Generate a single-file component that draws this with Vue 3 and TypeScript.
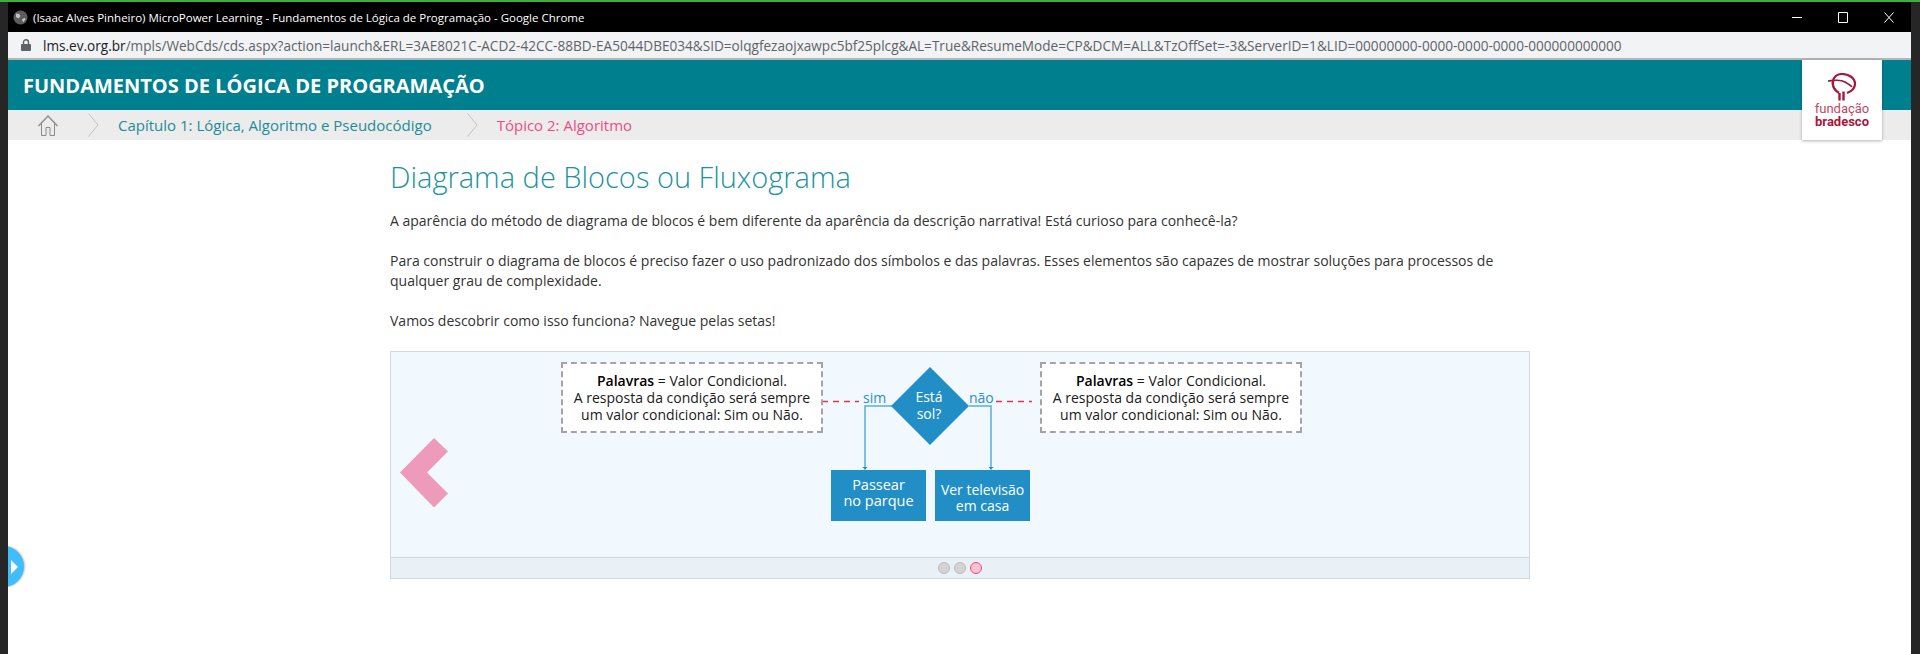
<script setup lang="ts">
interface Note {
  id: number
  lead: string
  rest: string
}

const notes: Note[] = [
  { id: 1, lead: 'Palavras', rest: ' = Valor Condicional.' },
  { id: 2, lead: 'Palavras', rest: ' = Valor Condicional.' },
]

const dots = [false, false, true]
</script>

<template>
  <div class="window">
    <div class="titlebar">
      <svg class="globe" width="15" height="15" viewBox="0 0 15 15">
        <circle cx="7.5" cy="7.5" r="7" fill="#5c5c5c" />
        <path d="M3 3.5l3 .5 1.500 2-2 2.500L3 7zM9 9l3-1 .5 1.500-2.500 3z" fill="#c4c4c4" />
      </svg>
      <span class="window-title">(Isaac Alves Pinheiro) MicroPower Learning - Fundamentos de Lógica de Programação - Google Chrome</span>
      <div class="controls">
        <svg width="10" height="10" viewBox="0 0 10 10"><path d="M0 5.500h10" stroke="#fff" /></svg>
        <svg width="10" height="11" viewBox="0 0 10 11"><path d="M.5.5h9v10h-9z" stroke="#fff" fill="none" /></svg>
        <svg width="10" height="11" viewBox="0 0 10 11"><path d="M.5.5l9 10M9.500.5l-9 10" stroke="#fff" fill="none" /></svg>
      </div>
    </div>

    <div class="urlbar">
      <svg width="10" height="12" viewBox="0 0 10 12">
        <path d="M2.500 5V3.200a2.500 2.500 0 0 1 5 0V5" stroke="#5f6368" stroke-width="1.400" fill="none" />
        <rect y="5" width="10" height="7" rx="1" fill="#5f6368" />
      </svg>
      <span class="url"><b>lms.ev.org.br</b>/mpls/WebCds/cds.aspx?action=launch&amp;ERL=3AE8021C-ACD2-42CC-88BD-EA5044DBE034&amp;SID=olqgfezaojxawpc5bf25plcg&amp;AL=True&amp;ResumeMode=CP&amp;DCM=ALL&amp;TzOffSet=-3&amp;ServerID=1&amp;LID=00000000-0000-0000-0000-000000000000</span>
    </div>

    <div class="page">
      <header class="course-bar">
        <h1>FUNDAMENTOS DE LÓGICA DE PROGRAMAÇÃO</h1>
      </header>

      <nav class="crumbs">
        <svg class="home" width="20" height="21" viewBox="0 0 20 21" fill="none" stroke="#8a8a8a">
          <path d="M.5 11L10 1l9.500 10" stroke-width="1.300" />
          <path d="M3.500 9v11.500h4.500v-8h4v8h4.500V9" />
        </svg>
        <svg class="sep" width="11" height="24" viewBox="0 0 11 24"><path d="M.5.5L10 12 .5 23.500" stroke="#c2c2c2" fill="none" /></svg>
        <span class="crumb-chapter">Capítulo 1: Lógica, Algoritmo e Pseudocódigo</span>
        <svg class="sep" width="11" height="24" viewBox="0 0 11 24"><path d="M.5.5L10 12 .5 23.500" stroke="#c2c2c2" fill="none" /></svg>
        <span class="crumb-topic">Tópico 2: Algoritmo</span>
      </nav>

      <div class="logo-card">
        <svg width="30" height="28" viewBox="0 0 30 28" fill="none" stroke="#a6163c">
          <path d="M6 7C8 2.500 12 1 15 1c7 0 13 4 13 10 0 4-3 7-8 9" stroke-width="2.200" />
          <path d="M1 8c6-.5 12-2 17 1 3 2 6 3 7 5" stroke-width="1.600" />
          <path d="M6 7c-1 5 1 10 6 13" stroke-width="2.400" />
          <path d="M12.500 20v7.500M16.500 18.500v9" stroke-width="2.400" />
        </svg>
        <span class="logo-top">fundação</span>
        <span class="logo-bottom">bradesco</span>
      </div>

      <main class="content">
        <h2>Diagrama de Blocos ou Fluxograma</h2>
        <p>A aparência do método de diagrama de blocos é bem diferente da aparência da descrição narrativa! Está curioso para conhecê-la?</p>
        <p>Para construir o diagrama de blocos é preciso fazer o uso padronizado dos símbolos e das palavras. Esses elementos são capazes de mostrar soluções para processos de qualquer grau de complexidade.</p>
        <p>Vamos descobrir como isso funciona? Navegue pelas setas!</p>

        <section class="slider">
          <div class="stage">
            <svg class="wires" width="1138" height="205" viewBox="0 0 1138 205" fill="none">
              <path d="M431 49.500h37M605 49.500h36" stroke="#e5324f" stroke-width="1.500" stroke-dasharray="6 5" />
              <path d="M501 54h-27v62M578 54h22v62" stroke="#5aaedc" stroke-width="1.500" />
              <path d="M471.500 115h5l-2.500 3zM597.500 115h5l-2.500 3z" fill="#2b8fc4" />
              <path d="M539 15l39 39-39 39-39-39z" fill="#218fc5" />
              <path d="M9 120.500L43 86l14 13.500L36 120.500l21 21-14 14z" fill="#ee9bbb" />
            </svg>

            <div v-for="(note, i) in notes" :key="note.id" class="note" :class="i === 0 ? 'note-left' : 'note-right'">
              <b>{{ note.lead }}</b>{{ note.rest }}<br />
              A resposta da condição será sempre<br />
              um valor condicional: Sim ou Não.
            </div>

            <span class="answer answer-yes">sim</span>
            <span class="answer answer-no">não</span>
            <span class="question">Está<br />sol?</span>

            <div class="block block-yes">Passear<br />no parque</div>
            <div class="block block-no">Ver televisão<br />em casa</div>
          </div>

          <div class="pager">
            <span v-for="(active, i) in dots" :key="i" class="dot" :class="{ active }"></span>
          </div>
        </section>
      </main>

      <div class="side-tab">
        <svg width="7" height="14" viewBox="0 0 7 14"><path d="M0 0l7 7-7 7z" fill="#fff" /></svg>
      </div>
    </div>
  </div>
</template>

<style scoped>
.window {
  width: 1920px;
  height: 654px;
  display: flex;
  flex-direction: column;
  overflow: hidden;
  background: #262626;
  border-top: 2px solid #3fae3c;
  box-sizing: border-box;
  font-family: "Open Sans", "Liberation Sans", sans-serif;
}

.titlebar {
  height: 30px;
  margin-left: 8px;
  margin-right: 9px;
  padding: 0 0 0 5px;
  background: #000;
  display: flex;
  align-items: center;
  gap: 5px;
  flex: none;
}

.window-title {
  color: #fff;
  font-size: 11.5px;
  white-space: nowrap;
}

.controls {
  margin-left: auto;
  display: flex;
  align-items: center;
  gap: 36px;
  padding-right: 17px;
}

.urlbar {
  height: 26px;
  margin: 0 9px 0 8px;
  padding-left: 13px;
  background: #f1f3f4;
  border-bottom: 2px solid #b5b5b5;
  display: flex;
  align-items: center;
  gap: 12px;
  flex: none;
}

.url {
  font-size: 13.6px;
  color: #5f6368;
  white-space: nowrap;
}

.url b {
  font-weight: 400;
  color: #202124;
}

.page {
  position: relative;
  flex: 1;
  margin: 0 9px 0 8px;
  background: #fff;
  min-height: 0;
}

.course-bar {
  height: 50px;
  background: #00808f;
  display: flex;
  align-items: center;
  padding-left: 15px;
}

h1 {
  margin: 0;
  color: #fff;
  font-size: 20px;
  font-weight: 700;
}

.crumbs {
  height: 30px;
  background: #ececec;
  display: flex;
  align-items: center;
  padding-left: 30px;
  font-size: 15px;
}

.sep {
  margin: 0 19px 0 30px;
}

.crumb-chapter {
  color: #1d8c98;
  white-space: nowrap;
}

.crumbs .crumb-chapter + .sep {
  margin-left: 35px;
}

.crumb-topic {
  color: #ee4c84;
}

.logo-card {
  position: absolute;
  top: 0;
  left: 1794px;
  width: 80px;
  height: 80px;
  background: #fff;
  box-shadow: 0 1px 3px rgba(0, 0, 0, 0.3);
  display: flex;
  flex-direction: column;
  align-items: center;
  padding-top: 13px;
  box-sizing: border-box;
  color: #a6163c;
  font-family: Roboto, "Liberation Sans", sans-serif;
  line-height: 14px;
  font-size: 13px;
}

.logo-top {
  margin-top: 1px;
  color: #bd4a66;
}

.logo-bottom {
  font-weight: 700;
  margin-top: -1px;
}

.content {
  width: 1140px;
  margin-left: 382px;
  font-size: 14px;
  line-height: 20px;
  color: #333;
}

h2 {
  margin: 0;
  padding-top: 16px;
  font-size: 29px;
  line-height: 41px;
  font-weight: 300;
  color: #1d93a0;
}

p {
  margin: 0 0 20px;
}

h2 + p {
  margin-top: 14px;
}

.slider {
  margin-top: 1px;
  border: 1px solid #d3d8dc;
}

.stage {
  position: relative;
  height: 205px;
  background: #f2f9fe;
}

.wires {
  position: absolute;
  inset: 0;
}

.note {
  position: absolute;
  top: 10px;
  width: 262px;
  height: 71px;
  box-sizing: border-box;
  background: #fff;
  border: 2px dashed #a3a3a8;
  display: block;
  padding-top: 8px;
  font-size: 14px;
  line-height: 17px;
  text-align: center;
  color: #1a1a1a;
  white-space: nowrap;
}

.note b {
  font-weight: 600;
  color: #000;
}

.note-left {
  left: 170px;
}

.note-right {
  left: 649px;
}

.answer {
  position: absolute;
  top: 37px;
  font-size: 14px;
  line-height: 18px;
  color: #2b8fc4;
}

.answer-yes {
  left: 472px;
}

.answer-no {
  left: 578px;
}

.question {
  position: absolute;
  left: 499px;
  top: 36px;
  width: 78px;
  text-align: center;
  color: #fff;
  font-size: 14px;
  line-height: 17px;
}

.block {
  position: absolute;
  top: 118px;
  width: 95px;
  background: #218fc5;
  color: #fff;
  font-size: 14.5px;
  line-height: 16px;
  text-align: center;
  white-space: nowrap;
}

.block-yes {
  left: 440px;
  padding-top: 7px;
  height: 44px;
}

.block-no {
  left: 544px;
  padding-top: 12px;
  height: 39px;
  font-size: 14px;
}

.pager {
  height: 20px;
  border-top: 1px solid #d3d8dc;
  background: #e9f0f6;
  display: flex;
  justify-content: center;
  align-items: center;
  gap: 4px;
}

.dot {
  width: 12px;
  height: 12px;
  box-sizing: border-box;
  border-radius: 50%;
  background: #d3d3d3;
  border: 1px solid #bcbcbc;
}

.dot.active {
  background: #fbc0d2;
  border-color: #ee4c84;
}

.side-tab {
  position: absolute;
  left: -8px;
  top: 486px;
  width: 24px;
  height: 41px;
  box-sizing: border-box;
  padding-left: 11px;
  display: flex;
  align-items: center;
  border-radius: 0 21px 21px 0;
  background: #40bdfb;
  box-shadow: 1px 0 2px rgba(0, 0, 0, 0.25);
  clip-path: inset(-4px -4px -4px 8px);
}
</style>

<style>
html,
body {
  margin: 0;
  background: #262626;
}
</style>
